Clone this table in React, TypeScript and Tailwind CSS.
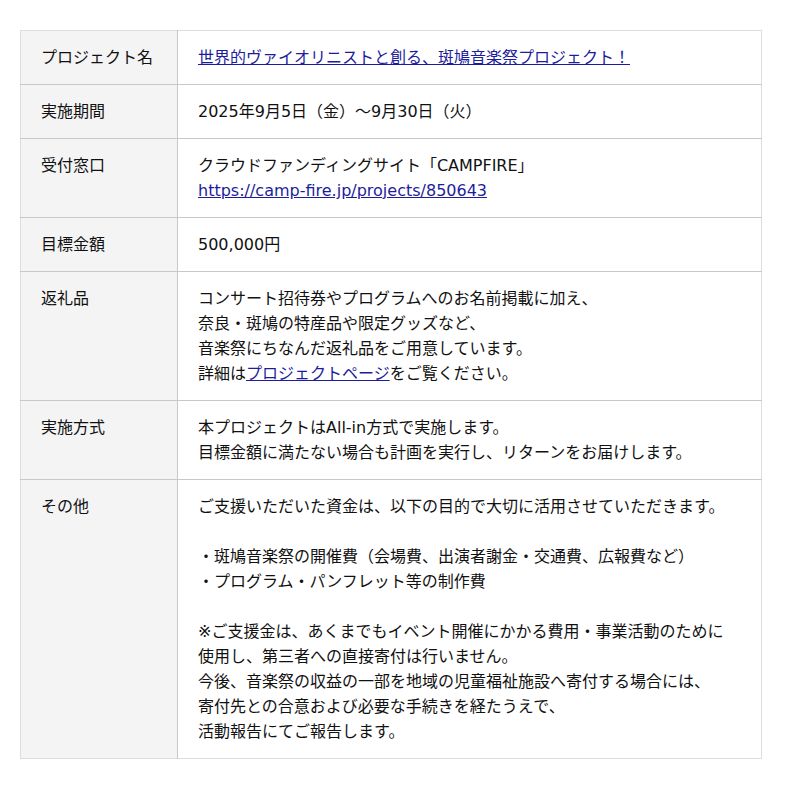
const rows: { label: string; content: React.ReactNode }[] = [
  {
    label: "プロジェクト名",
    content: (
      <a href="#" className="text-[#1d1d9b] underline">
        世界的ヴァイオリニストと創る、斑鳩音楽祭プロジェクト！
      </a>
    ),
  },
  { label: "実施期間", content: "2025年9月5日（金）〜9月30日（火）" },
  {
    label: "受付窓口",
    content: (
      <>
        クラウドファンディングサイト「CAMPFIRE」
        <br />
        <a href="#" className="text-[#1d1d9b] underline">
          https://camp-fire.jp/projects/850643
        </a>
      </>
    ),
  },
  { label: "目標金額", content: "500,000円" },
  {
    label: "返礼品",
    content: (
      <>
        コンサート招待券やプログラムへのお名前掲載に加え、
        <br />
        奈良・斑鳩の特産品や限定グッズなど、
        <br />
        音楽祭にちなんだ返礼品をご用意しています。
        <br />
        詳細は
        <a href="#" className="text-[#1d1d9b] underline">
          プロジェクトページ
        </a>
        をご覧ください。
      </>
    ),
  },
  {
    label: "実施方式",
    content: (
      <>
        本プロジェクトはAll-in方式で実施します。
        <br />
        目標金額に満たない場合も計画を実行し、リターンをお届けします。
      </>
    ),
  },
  {
    label: "その他",
    content: (
      <>
        ご支援いただいた資金は、以下の目的で大切に活用させていただきます。
        <br />
        <br />
        ・斑鳩音楽祭の開催費（会場費、出演者謝金・交通費、広報費など）
        <br />
        ・プログラム・パンフレット等の制作費
        <br />
        <br />
        ※ご支援金は、あくまでもイベント開催にかかる費用・事業活動のために
        <br />
        使用し、第三者への直接寄付は行いません。
        <br />
        今後、音楽祭の収益の一部を地域の児童福祉施設へ寄付する場合には、
        <br />
        寄付先との合意および必要な手続きを経たうえで、
        <br />
        活動報告にてご報告します。
      </>
    ),
  },
];

export default function App() {
  return (
    <div className="min-h-[789px] bg-white pt-[30px] font-['DejaVu_Sans','Noto_Sans_CJK_JP',sans-serif] text-[16px] leading-[25px] text-[#111]">
      <table className="ml-[20px] w-[742px] border-collapse border border-[#dddddd]">
        <tbody>
          {rows.map((row, i) => (
            <tr
              key={row.label}
              className={i < rows.length - 1 ? "border-b border-[#c8c8c8]" : ""}
            >
              <th className="w-[157px] border-r border-[#c8c8c8] bg-[#f4f4f4] px-[20px] py-[14px] text-left align-top font-normal">
                {row.label}
              </th>
              <td className="px-[20px] py-[14px] align-top">{row.content}</td>
            </tr>
          ))}
        </tbody>
      </table>
    </div>
  );
}
